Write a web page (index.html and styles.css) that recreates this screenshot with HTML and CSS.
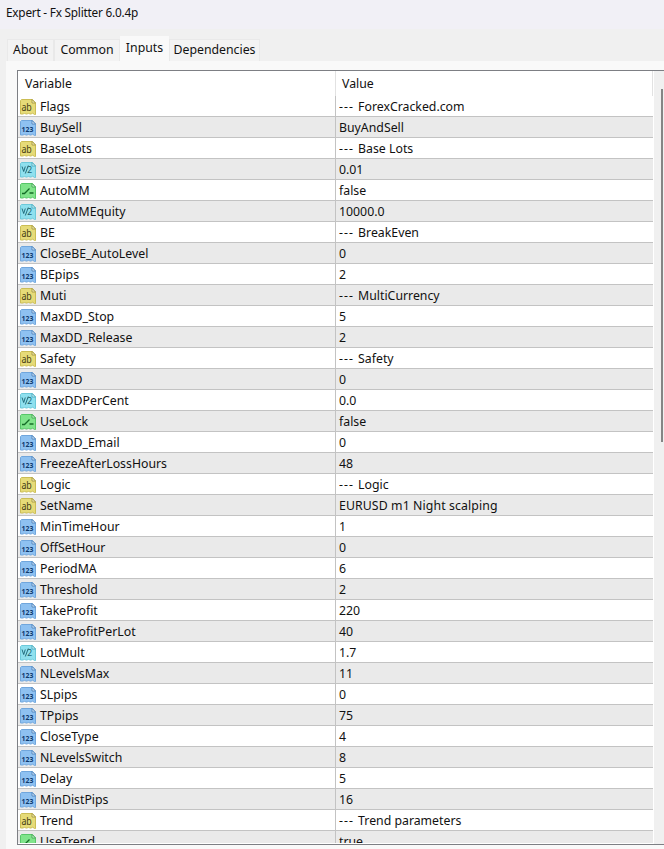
FILE: index.html
```html
<!DOCTYPE html>
<html lang="en">
<head>
  <meta charset="UTF-8">
  <title>Expert - Fx Splitter 6.0.4p</title>
  <link rel="stylesheet" href="styles.css">
</head>
<body>
  <!-- input type icons -->
  <svg class="sprite" width="0" height="0">
    <symbol id="text" viewBox="0 0 16 16">
      <path d="M.5 1.5l1-1h11l3 3.5v11.5h-1l-2-1.5-1 1h-2l-1-1-1 1h-2l-1-1-1 1h-3z" fill="#e6db78" stroke="#cbbd55"/>
      <path d="M12 .5v3.5h3.5z" fill="#f8f2b5" stroke="#9c8f3c" stroke-width=".8"/>
      <text x="1.4" y="11.6" textLength="10.4" lengthAdjust="spacingAndGlyphs" font-size="10" fill="#453e12">ab</text>
    </symbol>
    <symbol id="int" viewBox="0 0 16 16">
      <path d="M.5 1.5l1-1h11l3 3.5v11.5h-1l-2-1.5-1 1h-2l-1-1-1 1h-2l-1-1-1 1h-3z" fill="#8ec1f1" stroke="#70a6dc"/>
      <path d="M12 .5v3.5h3.5z" fill="#d4eafd" stroke="#4a7cb3" stroke-width=".8"/>
      <text x="1.6" y="11.6" textLength="11.8" lengthAdjust="spacingAndGlyphs" font-size="7.6" font-weight="bold" fill="#0f3a6e">123</text>
    </symbol>
    <symbol id="double" viewBox="0 0 16 16">
      <path d="M.5 1.5l1-1h11l3 3.5v11.5h-1l-2-1.5-1 1h-2l-1-1-1 1h-2l-1-1-1 1h-3z" fill="#8fe0ee" stroke="#6dc9da"/>
      <path d="M12 .5v3.5h3.5z" fill="#d3f7fc" stroke="#45a2b5" stroke-width=".8"/>
      <path d="M2 4.5l1.7 5 1.6-5M5.3 11.5l3-8" fill="none" stroke="#17606f" stroke-width=".9"/>
      <text x="7.3" y="11.4" font-size="8.5" fill="#17606f">2</text>
    </symbol>
    <symbol id="bool" viewBox="0 0 16 16">
      <path d="M.5 1.5l1-1h11l3 3.5v11.5h-1l-2-1.5-1 1h-2l-1-1-1 1h-2l-1-1-1 1h-3z" fill="#80e48b" stroke="#58c669"/>
      <path d="M12 .5v3.5h3.5z" fill="#cbfad0" stroke="#3d9d4e" stroke-width=".8"/>
      <path d="M2 10.5h2.5l5-5M9.5 10h4" fill="none" stroke="#146c27" stroke-width="1.3"/>
    </symbol>
  </svg>

  <header class="titlebar">Expert - Fx Splitter 6.0.4p</header>

  <nav class="tabs">
    <span class="tab about">About</span>
    <span class="tab common">Common</span>
    <span class="tab inputs active">Inputs</span>
    <span class="tab deps">Dependencies</span>
  </nav>

  <main class="page">
    <div class="list">
      <div class="rows">
        <div class="head"><span class="name">Variable</span><span class="value">Value</span></div>
        <div class="row"><span class="name"><svg><use href="#text"/></svg>Flags</span><span class="value"><span class="dash">--- </span>ForexCracked.com</span></div>
        <div class="row"><span class="name"><svg><use href="#int"/></svg>BuySell</span><span class="value">BuyAndSell</span></div>
        <div class="row"><span class="name"><svg><use href="#text"/></svg>BaseLots</span><span class="value"><span class="dash">--- </span>Base Lots</span></div>
        <div class="row"><span class="name"><svg><use href="#double"/></svg>LotSize</span><span class="value">0.01</span></div>
        <div class="row"><span class="name"><svg><use href="#bool"/></svg>AutoMM</span><span class="value">false</span></div>
        <div class="row"><span class="name"><svg><use href="#double"/></svg>AutoMMEquity</span><span class="value">10000.0</span></div>
        <div class="row"><span class="name"><svg><use href="#text"/></svg>BE</span><span class="value"><span class="dash">--- </span>BreakEven</span></div>
        <div class="row"><span class="name"><svg><use href="#int"/></svg>CloseBE_AutoLevel</span><span class="value">0</span></div>
        <div class="row"><span class="name"><svg><use href="#int"/></svg>BEpips</span><span class="value">2</span></div>
        <div class="row"><span class="name"><svg><use href="#text"/></svg>Muti</span><span class="value"><span class="dash">--- </span>MultiCurrency</span></div>
        <div class="row"><span class="name"><svg><use href="#int"/></svg>MaxDD_Stop</span><span class="value">5</span></div>
        <div class="row"><span class="name"><svg><use href="#int"/></svg>MaxDD_Release</span><span class="value">2</span></div>
        <div class="row"><span class="name"><svg><use href="#text"/></svg>Safety</span><span class="value"><span class="dash">--- </span>Safety</span></div>
        <div class="row"><span class="name"><svg><use href="#int"/></svg>MaxDD</span><span class="value">0</span></div>
        <div class="row"><span class="name"><svg><use href="#double"/></svg>MaxDDPerCent</span><span class="value">0.0</span></div>
        <div class="row"><span class="name"><svg><use href="#bool"/></svg>UseLock</span><span class="value">false</span></div>
        <div class="row"><span class="name"><svg><use href="#int"/></svg>MaxDD_Email</span><span class="value">0</span></div>
        <div class="row"><span class="name"><svg><use href="#int"/></svg>FreezeAfterLossHours</span><span class="value">48</span></div>
        <div class="row"><span class="name"><svg><use href="#text"/></svg>Logic</span><span class="value"><span class="dash">--- </span>Logic</span></div>
        <div class="row"><span class="name"><svg><use href="#text"/></svg>SetName</span><span class="value wide">EURUSD m1 Night scalping</span></div>
        <div class="row"><span class="name"><svg><use href="#int"/></svg>MinTimeHour</span><span class="value">1</span></div>
        <div class="row"><span class="name"><svg><use href="#int"/></svg>OffSetHour</span><span class="value">0</span></div>
        <div class="row"><span class="name"><svg><use href="#int"/></svg>PeriodMA</span><span class="value">6</span></div>
        <div class="row"><span class="name"><svg><use href="#int"/></svg>Threshold</span><span class="value">2</span></div>
        <div class="row"><span class="name"><svg><use href="#int"/></svg>TakeProfit</span><span class="value">220</span></div>
        <div class="row"><span class="name"><svg><use href="#int"/></svg>TakeProfitPerLot</span><span class="value">40</span></div>
        <div class="row"><span class="name"><svg><use href="#double"/></svg>LotMult</span><span class="value">1.7</span></div>
        <div class="row"><span class="name"><svg><use href="#int"/></svg>NLevelsMax</span><span class="value">11</span></div>
        <div class="row"><span class="name"><svg><use href="#int"/></svg>SLpips</span><span class="value">0</span></div>
        <div class="row"><span class="name"><svg><use href="#int"/></svg>TPpips</span><span class="value">75</span></div>
        <div class="row"><span class="name"><svg><use href="#int"/></svg>CloseType</span><span class="value">4</span></div>
        <div class="row"><span class="name"><svg><use href="#int"/></svg>NLevelsSwitch</span><span class="value">8</span></div>
        <div class="row"><span class="name"><svg><use href="#int"/></svg>Delay</span><span class="value">5</span></div>
        <div class="row"><span class="name"><svg><use href="#int"/></svg>MinDistPips</span><span class="value">16</span></div>
        <div class="row"><span class="name"><svg><use href="#text"/></svg>Trend</span><span class="value"><span class="dash">--- </span>Trend parameters</span></div>
        <div class="row"><span class="name"><svg><use href="#bool"/></svg>UseTrend</span><span class="value">true</span></div>
      </div>
      <div class="scrollbar"><div class="thumb"></div></div>
    </div>
  </main>
</body>
</html>
```
FILE: styles.css
```css
* {
  box-sizing: border-box;
}
body {
  margin: 0;
  height: 849px;
  overflow: hidden;
  display: flex;
  flex-direction: column;
  background: #f0f0f0;
  color: #111;
  font-family: "Noto Sans", "Open Sans", sans-serif;
  font-size: 12.3px;
}
.sprite {
  display: none;
}
.titlebar {
  height: 29px;
  flex: none;
  padding-left: 6px;
  line-height: 24px;
  font-size: 11.8px;
  letter-spacing: -0.22px;
  background: #f1f0f6;
}
.tabs {
  height: 32px;
  flex: none;
  display: flex;
  align-items: flex-end;
  padding-left: 7px;
}
.tab {
  height: 22px;
  line-height: 20px;
  text-align: center;
  white-space: nowrap;
  background: #f3f3f3;
  border: 1px solid #e9e9e9;
  border-bottom: none;
}
.about {
  width: 47px;
}
.common {
  width: 66px;
}
.inputs {
  width: 49px;
}
.deps {
  width: 91px;
}
.tab.active {
  height: 25px;
  line-height: 22px;
  background: #f9f9f9;
  border-color: #f9f9f9;
}
.page {
  flex: 1;
  min-height: 0;
  margin-left: 6px;
  padding: 9px 0 4px 11px;
  background: #f9f9f9;
}
.list {
  height: 775px;
  display: flex;
  background: #fff;
  border: 1px solid #7d7f84;
  border-right: none;
  overflow: hidden;
}
.rows {
  width: 636px;
  flex: none;
  padding-right: 1px;
  border-bottom: 1px solid #fff;
  overflow: hidden;
}
.head {
  height: 25px;
  display: flex;
  line-height: 26px;
  border-right: 1px solid #e2e2e2;
}
.row {
  height: 21px;
  display: flex;
  line-height: 22px;
  border-bottom: 1px solid #c3c3c3;
}
.row:nth-child(odd) {
  background: #eaeaea;
}
.name {
  width: 317px;
  display: flex;
  align-items: center;
  padding: 2px 0 0 2px;
}
.name svg {
  width: 16px;
  height: 16px;
  margin-right: 4px;
}
.value {
  flex: 1;
  padding-left: 3px;
  border-left: 1px solid #c3c3c3;
}
.wide {
  letter-spacing: 0.1px;
}
.head .name {
  padding: 0 0 0 7px;
}
.head .value {
  padding-left: 6px;
  border-left-color: #e2e2e2;
}
/* section separators */
.dash {
  letter-spacing: 1px;
}
.scrollbar {
  flex: 1;
  display: flex;
  justify-content: flex-end;
  padding: 18px 1px 0 0;
  background: #f0f0f0;
}
.thumb {
  width: 2px;
  height: 353px;
  background: #858585;
}
```
